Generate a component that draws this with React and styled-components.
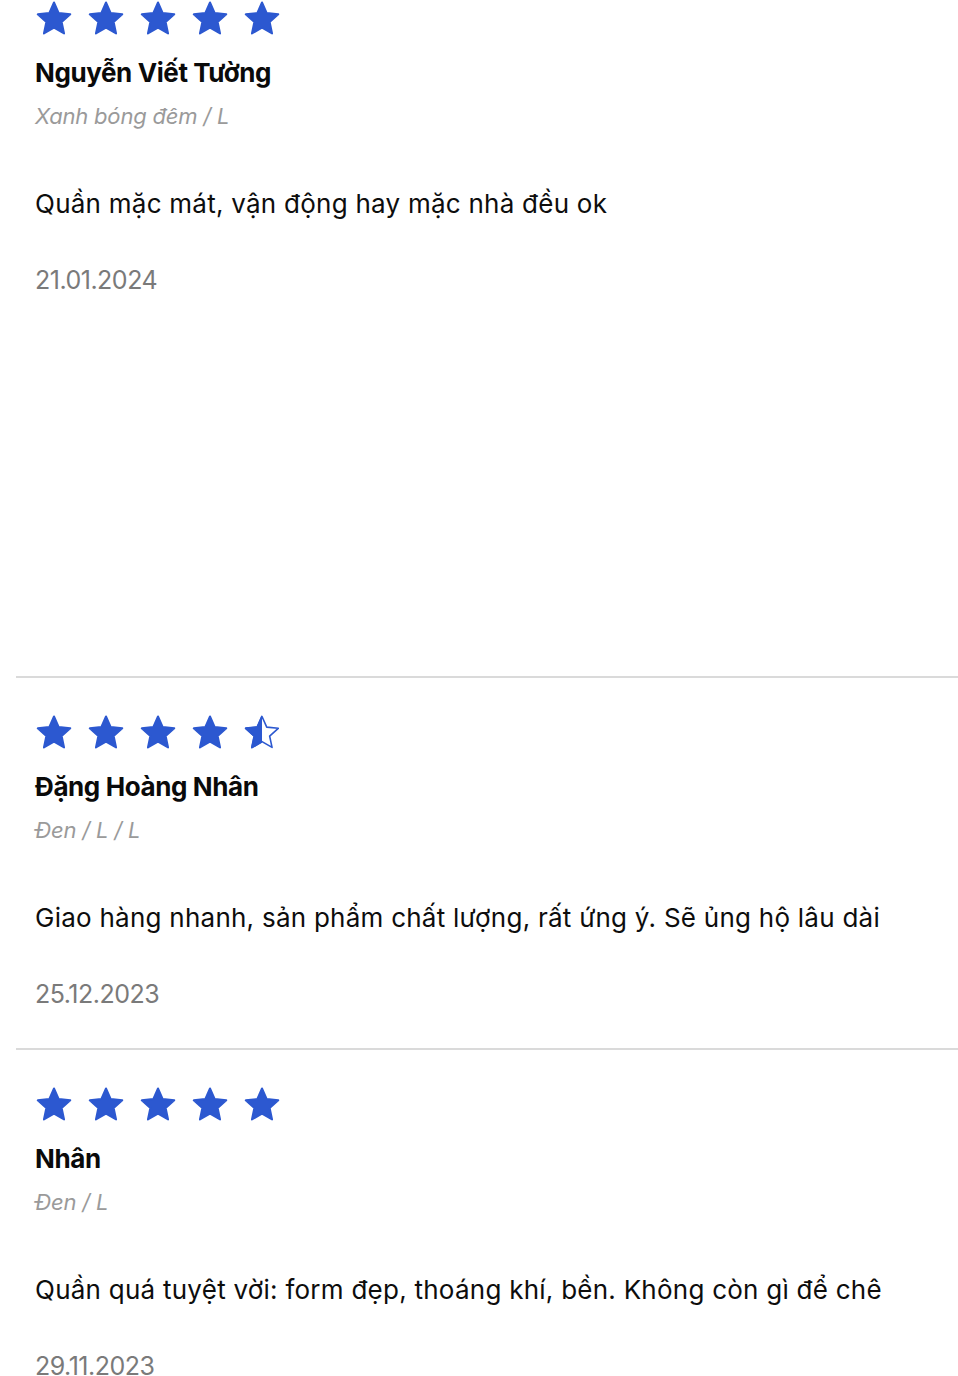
import styled, { createGlobalStyle } from 'styled-components'

const GlobalStyle = createGlobalStyle`
  html, body {
    margin: 0;
    padding: 0;
    background: #fff;
  }
  body {
    font-family: Inter, "Noto Sans", "Liberation Sans", sans-serif;
    color: #111;
  }
`

const List = styled.div`
  margin-left: 16px;
`

const Review = styled.div`
  padding: ${(p) => (p.$first ? '1px' : '37px')} 0 36px 19px;
  min-height: ${(p) => p.$minHeight || 0}px;
  border-bottom: 2px solid #dadada;

  &:last-child {
    border-bottom: none;
  }
`

const Stars = styled.div`
  display: flex;
  gap: 16px;
  height: 34px;
  margin-left: 1px;
`

const Name = styled.h3`
  margin: 21px 0 0;
  font-size: 26px;
  line-height: 34px;
  font-weight: 700;
  letter-spacing: -0.4px;
  color: #0a0a0a;
`

const Variant = styled.div`
  margin-top: 11px;
  font-size: 22px;
  line-height: 30px;
  font-style: italic;
  color: #9a9a9a;
  letter-spacing: -0.2px;
`

const Comment = styled.p`
  margin: 55px 0 0;
  font-size: 26px;
  line-height: 36px;
  color: #0d0d0d;
  letter-spacing: 0.25px;
`

const Date = styled.div`
  margin-top: 40px;
  font-size: 25px;
  line-height: 36px;
  color: #7a7a7a;
  letter-spacing: -0.5px;
`

const BLUE = '#2c58d0'

// five-point star inside a 36x34 box
const starPath = (() => {
  const cx = 18
  const cy = 18.6
  const R = 17.1
  const r = R * 0.47
  const pts = []
  for (let i = 0; i < 10; i++) {
    const a = (Math.PI / 5) * i - Math.PI / 2
    const rad = i % 2 === 0 ? R : r
    pts.push(`${(cx + rad * Math.cos(a)).toFixed(2)},${(cy + rad * Math.sin(a)).toFixed(2)}`)
  }
  return `M${pts.join('L')}Z`
})()

function Star({ fill, id }) {
  return (
    <svg width="36" height="34" viewBox="0 0 36 34">
      {fill === 'full' ? (
        <path d={starPath} fill={BLUE} stroke={BLUE} strokeWidth="2" strokeLinejoin="round" />
      ) : (
        <>
          <defs>
            <clipPath id={id}>
              <rect x="0" y="0" width="18" height="34" />
            </clipPath>
          </defs>
          <path d={starPath} fill="none" stroke={BLUE} strokeWidth="1.6" strokeLinejoin="round" />
          {fill === 'half' && (
            <path
              d={starPath}
              fill={BLUE}
              stroke={BLUE}
              strokeWidth="2"
              strokeLinejoin="round"
              clipPath={`url(#${id})`}
            />
          )}
        </>
      )}
    </svg>
  )
}

function Rating({ value, index }) {
  return (
    <Stars>
      {[1, 2, 3, 4, 5].map((i) => (
        <Star
          key={i}
          id={`star-${index}-${i}`}
          fill={value >= i ? 'full' : value >= i - 0.5 ? 'half' : 'none'}
        />
      ))}
    </Stars>
  )
}

const reviews = [
  {
    rating: 5,
    name: 'Nguyễn Viết Tường',
    variant: 'Xanh bóng đêm / L',
    text: 'Quần mặc mát, vận động hay mặc nhà đều ok',
    date: '21.01.2024',
    minHeight: 639,
  },
  {
    rating: 4.5,
    name: 'Đặng Hoàng Nhân',
    variant: 'Đen / L / L',
    text: 'Giao hàng nhanh, sản phẩm chất lượng, rất ứng ý. Sẽ ủng hộ lâu dài',
    date: '25.12.2023',
  },
  {
    rating: 5,
    name: 'Nhân',
    variant: 'Đen / L',
    text: 'Quần quá tuyệt vời: form đẹp, thoáng khí, bền. Không còn gì để chê',
    date: '29.11.2023',
  },
]

export default function App() {
  return (
    <>
      <GlobalStyle />
      <List>
        {reviews.map((r, i) => (
          <Review key={i} $first={i === 0} $minHeight={r.minHeight}>
            <Rating value={r.rating} index={i} />
            <Name>{r.name}</Name>
            <Variant>{r.variant}</Variant>
            <Comment>{r.text}</Comment>
            <Date>{r.date}</Date>
          </Review>
        ))}
      </List>
    </>
  )
}
